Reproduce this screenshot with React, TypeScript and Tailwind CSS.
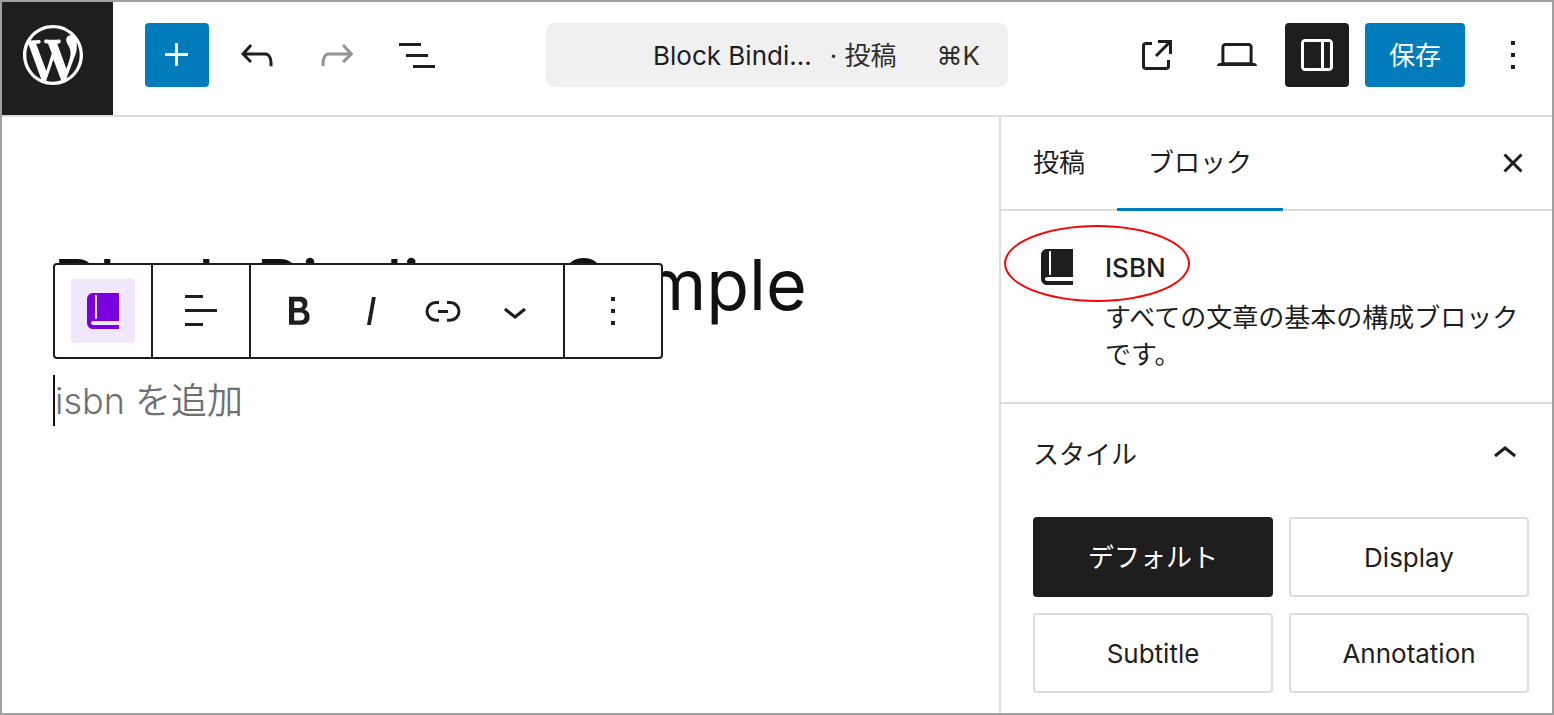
import React, { useState } from "react";

const icons = {
  plus: "M11 12.5V17.5H12.5V12.5H17.5V11H12.5V6H11V11H6V12.5H11Z",
  undo: "M18.3 11.7c-.6-.6-1.4-.9-2.3-.9H6.7l2.9-3.3-1.1-1-4.5 5L8.5 16l1-1-2.7-2.7H16c.5 0 .9.2 1.3.5 1 1 1 3.4 1 4.5v.3h1.5v-.2c0-1.5 0-4.3-1.5-5.7z",
  redo: "M15.6 6.5l-1.1 1 2.9 3.3H8c-.9 0-1.7.3-2.3.9-1.4 1.5-1.4 4.2-1.4 5.6v.2h1.5v-.3c0-1.1 0-3.5 1-4.5.3-.3.7-.5 1.3-.5h9.2L14.5 15l1.1 1.1 4.6-4.6-4.6-5z",
  listView:
    "M3 6h11v1.5H3V6Zm3.5 5.5h11V13h-11v-1.5ZM21 17H10v1.5h11V17Z",
  external:
    "M19.5 4.5h-7V6h4.44l-5.97 5.97 1.06 1.06L18 7.06v4.44h1.5v-7Zm-13 1a2 2 0 0 0-2 2v10a2 2 0 0 0 2 2h10a2 2 0 0 0 2-2v-3H17v3a.5.5 0 0 1-.5.5h-10a.5.5 0 0 1-.5-.5v-10a.5.5 0 0 1 .5-.5h3V5.5h-3Z",
  desktop:
    "M20.5 16h-.7V8c0-1.1-.9-2-2-2H6.2c-1.1 0-2 .9-2 2v8h-.7c-.8 0-1.5.7-1.5 1.5h20c0-.8-.7-1.5-1.5-1.5zM5.7 8c0-.3.2-.5.5-.5h11.6c.3 0 .5.2.5.5v7.6H5.7V8z",
  drawer:
    "M18 4H6c-1.1 0-2 .9-2 2v12c0 1.1.9 2 2 2h12c1.1 0 2-.9 2-2V6c0-1.1-.9-2-2-2zm-4 14.5H6c-.3 0-.5-.2-.5-.5V6c0-.3.2-.5.5-.5h8v13zm4.5-.5c0 .3-.2.5-.5.5h-2.5v-13H18c.3 0 .5.2.5.5v12z",
  more: "M13 19h-2v-2h2v2zm0-6h-2v-2h2v2zm0-6h-2V5h2v2z",
  close:
    "M12 13.06l3.712 3.713 1.061-1.06L13.061 12l3.712-3.712-1.06-1.06L12 10.938 8.288 7.227l-1.061 1.06L10.939 12l-3.712 3.712 1.06 1.061L12 13.061z",
  chevronUp: "M6.5 12.4L12 8l5.5 4.4-.9 1.2L12 10l-4.5 3.6-1-1.2z",
  chevronDown: "M17.5 11.6L12 16l-5.5-4.4.9-1.2L12 14l4.5-3.6 1 1.2z",
  bold: "M14.7 11.3c1-.6 1.5-1.6 1.5-3 0-2.3-1.3-3.4-4-3.4H7v14h5.8c1.4 0 2.5-.3 3.3-1 .8-.7 1.2-1.7 1.2-2.9.1-1.9-.8-3.1-2.6-3.7zm-5.1-4h2.3c.6 0 1.1.1 1.4.4.3.3.5.7.5 1.2s-.2 1-.5 1.2c-.3.3-.8.4-1.4.4H9.6V7.3zm4.6 9c-.4.3-1 .4-1.7.4H9.6v-3.9h2.9c.7 0 1.3.2 1.7.5.4.3.6.8.6 1.5s-.2 1.2-.6 1.5z",
  italic: "M12.5 5L10 19h1.9l2.5-14z",
  link: "M10 17.389H8.444A5.194 5.194 0 1 1 8.444 7H10v1.5H8.444a3.694 3.694 0 0 0 0 7.389H10v1.5ZM14 7h1.556a5.194 5.194 0 0 1 0 10.39H14v-1.5h1.556a3.694 3.694 0 0 0 0-7.39H14V7Zm-4.5 6h5v-1.5h-5V13Z",
  alignLeft: "M13 5.5H4V4h9v1.5Zm7 7H4V11h16v1.5Zm-7 7H4V18h9v1.5Z",
};

type IconName = keyof typeof icons;

function Icon({ name }: { name: IconName }) {
  return (
    <svg viewBox="0 0 24 24" className="size-12 shrink-0" fill="currentColor">
      <path d={icons[name]} />
    </svg>
  );
}

function BookIcon() {
  return (
    <svg viewBox="0 0 20 20" className="size-10 shrink-0" fill="currentColor">
      <path d="M5 17h13v2H5c-1.66 0-3-1.34-3-3V4c0-1.66 1.34-3 3-3h13v14H5c-.55 0-1 .45-1 1s.45 1 1 1zm2-3.5v-11c0-.28-.22-.5-.5-.5s-.5.22-.5.5v11c0 .28.22.5.5.5s.5-.22.5-.5z" />
    </svg>
  );
}

function WordPressLogo() {
  return (
    <svg viewBox="-2 -2 24 24" className="size-[72px]" fill="currentColor">
      <path d="M20 10c0-5.51-4.49-10-10-10C4.48 0 0 4.49 0 10c0 5.52 4.48 10 10 10 5.51 0 10-4.48 10-10zM7.78 15.37L4.37 6.22c.55-.02 1.17-.08 1.17-.08.5-.06.44-1.13-.06-1.11 0 0-1.45.11-2.37.11-.18 0-.37 0-.58-.01C4.12 2.69 6.87 1.11 10 1.11c2.33 0 4.45.87 6.05 2.34-.68-.11-1.65.39-1.65 1.58 0 .74.45 1.36.9 2.1.35.61.55 1.36.55 2.46 0 1.49-1.4 5-1.4 5l-3.03-8.37c.54-.02.82-.17.82-.17.5-.05.44-1.25-.06-1.22 0 0-1.44.12-2.38.12-.87 0-2.33-.12-2.33-.12-.5-.03-.56 1.2-.06 1.22l.92.08 1.26 3.41zM17.41 10c.24-.64.74-1.87.43-4.25.7 1.29 1.05 2.71 1.05 4.25 0 3.29-1.73 6.24-4.4 7.78.97-2.59 1.94-5.2 2.92-7.78zM6.1 18.09C3.12 16.65 1.11 13.53 1.11 10c0-1.3.23-2.48.72-3.59C3.25 10.3 4.67 14.2 6.1 18.09zm4.03-6.63l2.58 6.98c-.86.29-1.76.45-2.71.45-.79 0-1.57-.11-2.29-.33.81-2.38 1.62-4.74 2.42-7.1z" />
    </svg>
  );
}

interface IconButtonProps {
  icon: IconName;
  label: string;
  className?: string;
  disabled?: boolean;
}

function IconButton({ icon, label, className = "", disabled }: IconButtonProps) {
  return (
    <button
      type="button"
      aria-label={label}
      disabled={disabled}
      className={`flex size-16 shrink-0 items-center justify-center rounded ${className}`}
    >
      <Icon name={icon} />
    </button>
  );
}

function Header() {
  return (
    <header className="flex border-b-2 border-[#dddddd]">
      <div className="flex flex-1 items-start">
        <a
          href="#"
          aria-label="投稿を表示"
          className="flex h-[113px] w-[111px] shrink-0 justify-center bg-[#1e1e1e] pt-[17px] pr-2.5 text-white"
        >
          <WordPressLogo />
        </a>
        <div className="flex gap-4 pt-[21px] pl-8">
          <IconButton icon="plus" label="ブロックを追加" className="bg-[#007cba] text-white" />
          <IconButton icon="undo" label="元に戻す" />
          <IconButton icon="redo" label="やり直す" className="text-[#949494]" disabled />
          <IconButton icon="listView" label="リスト表示" />
        </div>
      </div>
      <button
        type="button"
        className="mt-[21px] flex h-16 w-[462px] items-center justify-end rounded-lg bg-[#f0f0f0] pr-7 whitespace-nowrap"
      >
        <span>Block Bindi...</span>
        <span className="ml-[18px] text-[#2f2f2f]">· 投稿</span>
        <span className="ml-10 text-[#2f2f2f]">⌘K</span>
      </button>
      <div className="flex flex-1 justify-end gap-4 pt-[21px]">
        <IconButton icon="external" label="投稿を表示" />
        <IconButton icon="desktop" label="表示" />
        <IconButton icon="drawer" label="設定" className="bg-[#1e1e1e] text-white" />
        <button type="button" className="h-16 rounded bg-[#007cba] px-6 text-white">
          保存
        </button>
        <IconButton icon="more" label="オプション" className="mr-[7px]" />
      </div>
    </header>
  );
}

function BlockToolbar() {
  const group = "flex items-center justify-center border-[#1e1e1e]";
  const tool = "flex h-16 w-[72px] items-center justify-center";

  return (
    <div
      role="toolbar"
      aria-label="ブロックツール"
      className="absolute top-[146px] left-[51px] flex h-24 rounded border-2 border-[#1e1e1e] bg-white"
    >
      <div className={`${group} w-[98px] border-r-2`}>
        <button
          type="button"
          aria-label="ISBN"
          className="flex size-16 items-center justify-center rounded bg-[#f1e7fa] text-[#7a00df]"
        >
          <BookIcon />
        </button>
      </div>
      <div className={`${group} w-[98px] border-r-2`}>
        <IconButton icon="alignLeft" label="テキストの配置" />
      </div>
      <div className={`${group} border-r-2 px-3`}>
        <button type="button" aria-label="太字" className={tool}>
          <Icon name="bold" />
        </button>
        <button type="button" aria-label="イタリック" className={tool}>
          <Icon name="italic" />
        </button>
        <button type="button" aria-label="リンク" className={tool}>
          <Icon name="link" />
        </button>
        <button type="button" aria-label="さらに表示" className={tool}>
          <Icon name="chevronDown" />
        </button>
      </div>
      <div className={`${group} w-24`}>
        <IconButton icon="more" label="オプション" />
      </div>
    </div>
  );
}

function Editor() {
  return (
    <main className="relative min-w-0 flex-1 px-[51px] pt-[124px]">
      <h1 className="text-[70px] leading-[88px] whitespace-nowrap text-[#111111]">
        Block Bindings Sample
      </h1>
      <div className="mt-[46px] border-l-2 border-[#111111]">
        <input
          type="text"
          aria-label="ISBN"
          placeholder="isbn を追加"
          className="block h-[51px] w-full text-[36px] font-[350] outline-none placeholder:text-[#707070]"
        />
      </div>
      <BlockToolbar />
    </main>
  );
}

const styles = ["デフォルト", "Display", "Subtitle", "Annotation"];

function Sidebar() {
  const [selected, setSelected] = useState<string>("デフォルト");

  return (
    <aside className="w-[553px] shrink-0 border-l-2 border-[#dddddd]">
      <div className="flex h-[94px] border-b-2 border-[#dddddd]">
        <div role="tablist" className="-mb-0.5 flex">
          <button
            type="button"
            role="tab"
            aria-selected={false}
            className="border-b-3 border-transparent px-8"
          >
            投稿
          </button>
          <button
            type="button"
            role="tab"
            aria-selected={true}
            className="border-b-3 border-[#007cba] px-[31px]"
          >
            ブロック
          </button>
        </div>
        <button type="button" aria-label="設定を閉じる" className="mr-[15px] ml-auto">
          <Icon name="close" />
        </button>
      </div>

      <section className="relative flex gap-6 border-b-2 border-[#dddddd] pt-8 pr-4 pb-[29px] pl-8">
        <div className="flex size-12 shrink-0 items-center justify-center">
          <BookIcon />
        </div>
        <div>
          <h2 className="leading-[50px] font-medium">ISBN</h2>
          <p className="mt-1.5 leading-[37px]">すべての文章の基本の構成ブロックです。</p>
        </div>
        <div className="pointer-events-none absolute top-3.5 left-[3px] h-[77px] w-[186px] rounded-[50%] border-2 border-[#ff0000]" />
      </section>

      <section className="pr-[23px] pb-5 pl-8">
        <h2>
          <button type="button" aria-expanded={true} className="flex h-[100px] w-full items-center justify-between">
            スタイル
            <Icon name="chevronUp" />
          </button>
        </h2>
        <div className="mt-[13px] grid grid-cols-2 gap-4">
          {styles.map((style) => (
            <button
              key={style}
              type="button"
              onClick={() => setSelected(style)}
              className={`h-20 rounded border-2 ${
                style === selected
                  ? "border-[#1e1e1e] bg-[#1e1e1e] text-white"
                  : "border-[#dddddd] bg-white"
              }`}
            >
              {style}
            </button>
          ))}
        </div>
      </section>
    </aside>
  );
}

export default function App() {
  return (
    <div className="flex min-h-screen flex-col border-2 border-[#a0a0a0] bg-white font-['Inter','Noto_Sans_CJK_JP',sans-serif] text-[26px] text-[#1e1e1e]">
      <Header />
      <div className="flex flex-1">
        <Editor />
        <Sidebar />
      </div>
    </div>
  );
}
